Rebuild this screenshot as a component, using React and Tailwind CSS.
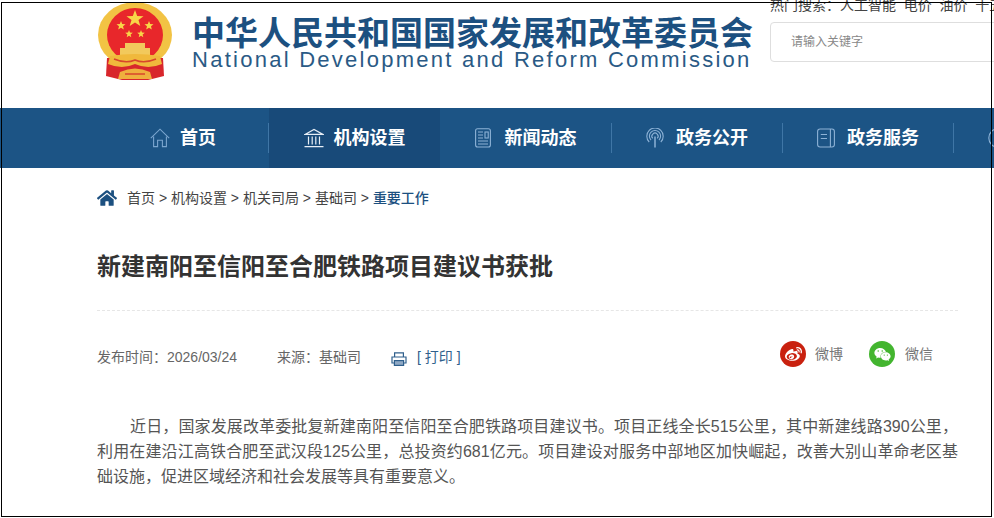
import React from 'react';
import { FaHome, FaWeibo, FaWeixin } from 'react-icons/fa';

const FONT = { sans: 'font-["Liberation_Sans","Noto_Sans_CJK_SC",sans-serif]' };

function Emblem() {
  return (
    <svg width="74" height="78" viewBox="0 0 74 78" className="shrink-0">
      <ellipse cx="37" cy="33" rx="37" ry="33" fill="#f2c344" />
      <path d="M9 56 L8 74 L24 78 H50 L66 74 L65 56 Z" fill="#d8262c" />
      <ellipse cx="37" cy="33" rx="28" ry="27" fill="#e8272b" />
      <polygon points="37,8 39.2,14 45.5,14.2 40.5,18 42.3,24 37,20.5 31.7,24 33.5,18 28.5,14.2 34.8,14" fill="#f8d648" />
      <polygon points="23,19 24.2,22 27.5,22.2 25,24.2 25.8,27.5 23,25.7 20.2,27.5 21,24.2 18.5,22.2 21.8,22" fill="#f8d648" />
      <polygon points="51,19 52.2,22 55.5,22.2 53,24.2 53.8,27.5 51,25.7 48.2,27.5 49,24.2 46.5,22.2 49.8,22" fill="#f8d648" />
      <polygon points="31,28 32,30.6 34.8,30.8 32.6,32.5 33.3,35.2 31,33.7 28.7,35.2 29.4,32.5 27.2,30.8 30,30.6" fill="#f8d648" />
      <polygon points="43,28 44,30.6 46.8,30.8 44.6,32.5 45.3,35.2 43,33.7 40.7,35.2 41.4,32.5 39.2,30.8 42,30.6" fill="#f8d648" />
      <path d="M27 41 H47 V46 H52 V53 H22 V46 H27 Z" fill="#f2c95c" />
      <path d="M12 54 Q37 50 62 54 L64 62 Q50 68 37 62 Q24 68 10 62 Z" fill="#f0b93c" />
      <path d="M16 57 Q28 62 37 58 Q46 62 58 57" fill="none" stroke="#d8462c" strokeWidth="1.5" />
      <path d="M22 70 Q37 63 52 70 L54 77 H20 Z" fill="#efb03e" />
      <path d="M27 72 H47" stroke="#d8462c" strokeWidth="1.5" />
    </svg>
  );
}

function HomeIcon() {
  return (
    <svg width="20" height="20" viewBox="0 0 20 20" fill="none" stroke="#7ba6cf" strokeWidth="1.1">
      <path d="M0.8 10.2 L10 1.2 L19.2 10.2" />
      <path d="M3.6 8.6 V18.6 H7.6 V12.2 H12.4 V18.6 H16.4 V8.6" />
    </svg>
  );
}

function BankIcon() {
  return (
    <svg width="20" height="20" viewBox="0 0 20 20" fill="none" stroke="#e6eef6" strokeWidth="1.2">
      <path d="M1 6.4 L10 1.4 L19 6.4 Z" />
      <path d="M4.5 8.5 V16.5 M8.2 8.5 V16.5 M11.8 8.5 V16.5 M15.5 8.5 V16.5 M0.5 18.6 H19.5" />
    </svg>
  );
}

function NewsIcon() {
  return (
    <svg width="16" height="20" viewBox="0 0 16 20" fill="none" stroke="#8db2d6" strokeWidth="1.1">
      <rect x="0.6" y="0.8" width="14.8" height="18.2" rx="2" />
      <path d="M3 4 H8 M3 7 H8 M3 10 H8 M3 13 H13 M3 16 H13" />
      <rect x="10" y="4" width="3.2" height="6" />
    </svg>
  );
}

function SignalIcon() {
  return (
    <svg width="18" height="20" viewBox="0 0 18 20" fill="none" stroke="#8db2d6" strokeWidth="1.1">
      <path d="M3.2 14 A8.2 8.2 0 1 1 14.8 14" />
      <path d="M5 12 A5.6 5.6 0 1 1 13 12" />
      <path d="M6.8 10.4 A3.1 3.1 0 1 1 11.2 10.4" />
      <path d="M9 8.5 V19.5" strokeWidth="1.5" />
    </svg>
  );
}

function BookIcon() {
  return (
    <svg width="18" height="20" viewBox="0 0 18 20" fill="none" stroke="#8db2d6" strokeWidth="1.1">
      <rect x="0.6" y="1" width="16.8" height="18" rx="2.5" />
      <path d="M13.4 1 V19 M3.8 6.5 H10 M3.8 10.5 H10" />
    </svg>
  );
}

function GlobeIcon() {
  return (
    <svg width="20" height="20" viewBox="0 0 20 20" fill="none" stroke="#8db2d6" strokeWidth="1.1">
      <circle cx="10" cy="10" r="9.2" />
    </svg>
  );
}

function PrintIcon() {
  return (
    <svg width="16" height="14" viewBox="0 0 16 14" fill="none" stroke="#2f5f8c" strokeWidth="1.2">
      <path d="M3.6 5 V0.8 H12.4 V5" />
      <path d="M3 11 H1 V5 H15 V11 H13" />
      <rect x="3.4" y="8.6" width="9.2" height="4.8" fill="#8fa8c4" />
    </svg>
  );
}

const navItems = [
  { label: '首页', icon: <HomeIcon />, width: 'w-[171px]' },
  { label: '机构设置', icon: <BankIcon />, width: 'w-[171px]', active: true },
  { label: '新闻动态', icon: <NewsIcon />, width: 'w-[172px]' },
  { label: '政务公开', icon: <SignalIcon />, width: 'w-[171px]' },
  { label: '政务服务', icon: <BookIcon />, width: 'w-[171px]' },
  { label: '互动交流', icon: <GlobeIcon />, width: 'w-[171px]' },
];

const crumbs = ['首页', '机构设置', '机关司局', '基础司'];

export default function App() {
  return (
    <div className={`relative h-[518px] w-[994px] overflow-hidden bg-white ${FONT.sans}`}>
      <header className="flex h-[108px] pl-[98px] pt-[2px]">
        <Emblem />
        <div className="ml-[20px] w-[560px] shrink-0 pt-[14px]">
          <div className="whitespace-nowrap text-[33px] leading-[36px] font-bold text-[#1c5080]">中华人民共和国国家发展和改革委员会</div>
          <div className="mt-[-6px] whitespace-nowrap text-[22px] leading-[28px] tracking-[2.26px] text-[#2a5a85]">National Development and Reform Commission</div>
        </div>
        <div className="ml-[18px] w-[230px] shrink-0">
          <div className="mt-[-6px] whitespace-nowrap text-[14px] leading-[18px] text-[#444]">热门搜索：人工智能&nbsp;&nbsp;电价&nbsp;&nbsp;油价&nbsp;&nbsp;十五五规划</div>
          <div className="mt-[8px] flex h-[40px] items-center rounded-[4px] border border-[#dedede] pl-[20px] text-[12px] text-[#888]">请输入关键字</div>
        </div>
      </header>

      <nav className="flex h-[60px] items-stretch bg-[#1c5485] pl-[98px]">
        {navItems.map((item) => (
          <div key={item.label} className={`flex shrink-0 items-center ${item.width} ${item.active ? 'bg-[#184a79]' : ''}`}>
            <div className="flex flex-1 items-center justify-center gap-[10px] whitespace-nowrap">
              <span className="flex w-[20px] shrink-0 items-center">{item.icon}</span>
              <span className="text-[18px] font-bold text-white">{item.label}</span>
            </div>
            {!item.active && <div className="h-[30px] w-px bg-[#3f76a6]" />}
          </div>
        ))}
      </nav>

      <main className="pl-[97px] pr-[36px]">
        <div className="mt-[20px] flex h-[20px] items-center text-[14px] text-[#444]">
          <FaHome className="mr-[10px] text-[#1c5080]" size={20} />
          {crumbs.map((c) => (
            <span key={c} className="whitespace-pre">{c} &gt; </span>
          ))}
          <span className="font-medium text-[#1c5080]">重要工作</span>
        </div>

        <h1 className="mt-[43px] text-[24px] leading-[32px] font-bold text-[#333]">新建南阳至信阳至合肥铁路项目建议书获批</h1>

        <div className="mt-[27px] border-t border-dashed border-[#e6e6e6]" />

        <div className="mt-[31px] flex h-[30px] items-center text-[14px] text-[#666]">
          <span>发布时间：2026/03/24</span>
          <span className="ml-[40px]">来源：基础司</span>
          <span className="ml-[30px] flex items-center text-[#2f5f8c]">
            <span className="mt-[3px]"><PrintIcon /></span>
            <span className="ml-[10px]">[ 打印 ]</span>
          </span>
          <div className="mb-[6px] ml-auto flex items-center">
            <span className="flex h-[26px] w-[26px] items-center justify-center rounded-full bg-[#c9210f]">
              <FaWeibo className="text-white" size={17} />
            </span>
            <span className="ml-[9px] text-[#777]">微博</span>
            <span className="ml-[26px] flex h-[26px] w-[26px] items-center justify-center rounded-full bg-[#43b52f]">
              <FaWeixin className="text-white" size={17} />
            </span>
            <span className="ml-[10px] mr-[25px] text-[#777]">微信</span>
          </div>
        </div>

        <p className="mt-[42px] indent-[33px] text-justify text-[16px] leading-[25px] text-[#555]">
          近日，国家发展改革委批复新建南阳至信阳至合肥铁路项目建议书。项目正线全长515公里，其中新建线路390公里，利用在建沿江高铁合肥至武汉段125公里，总投资约681亿元。项目建设对服务中部地区加快崛起，改善大别山革命老区基础设施，促进区域经济和社会发展等具有重要意义。
        </p>
      </main>

      <div className="pointer-events-none absolute top-[2px] right-[2px] bottom-[1px] left-[1px] border border-black" />
    </div>
  );
}
